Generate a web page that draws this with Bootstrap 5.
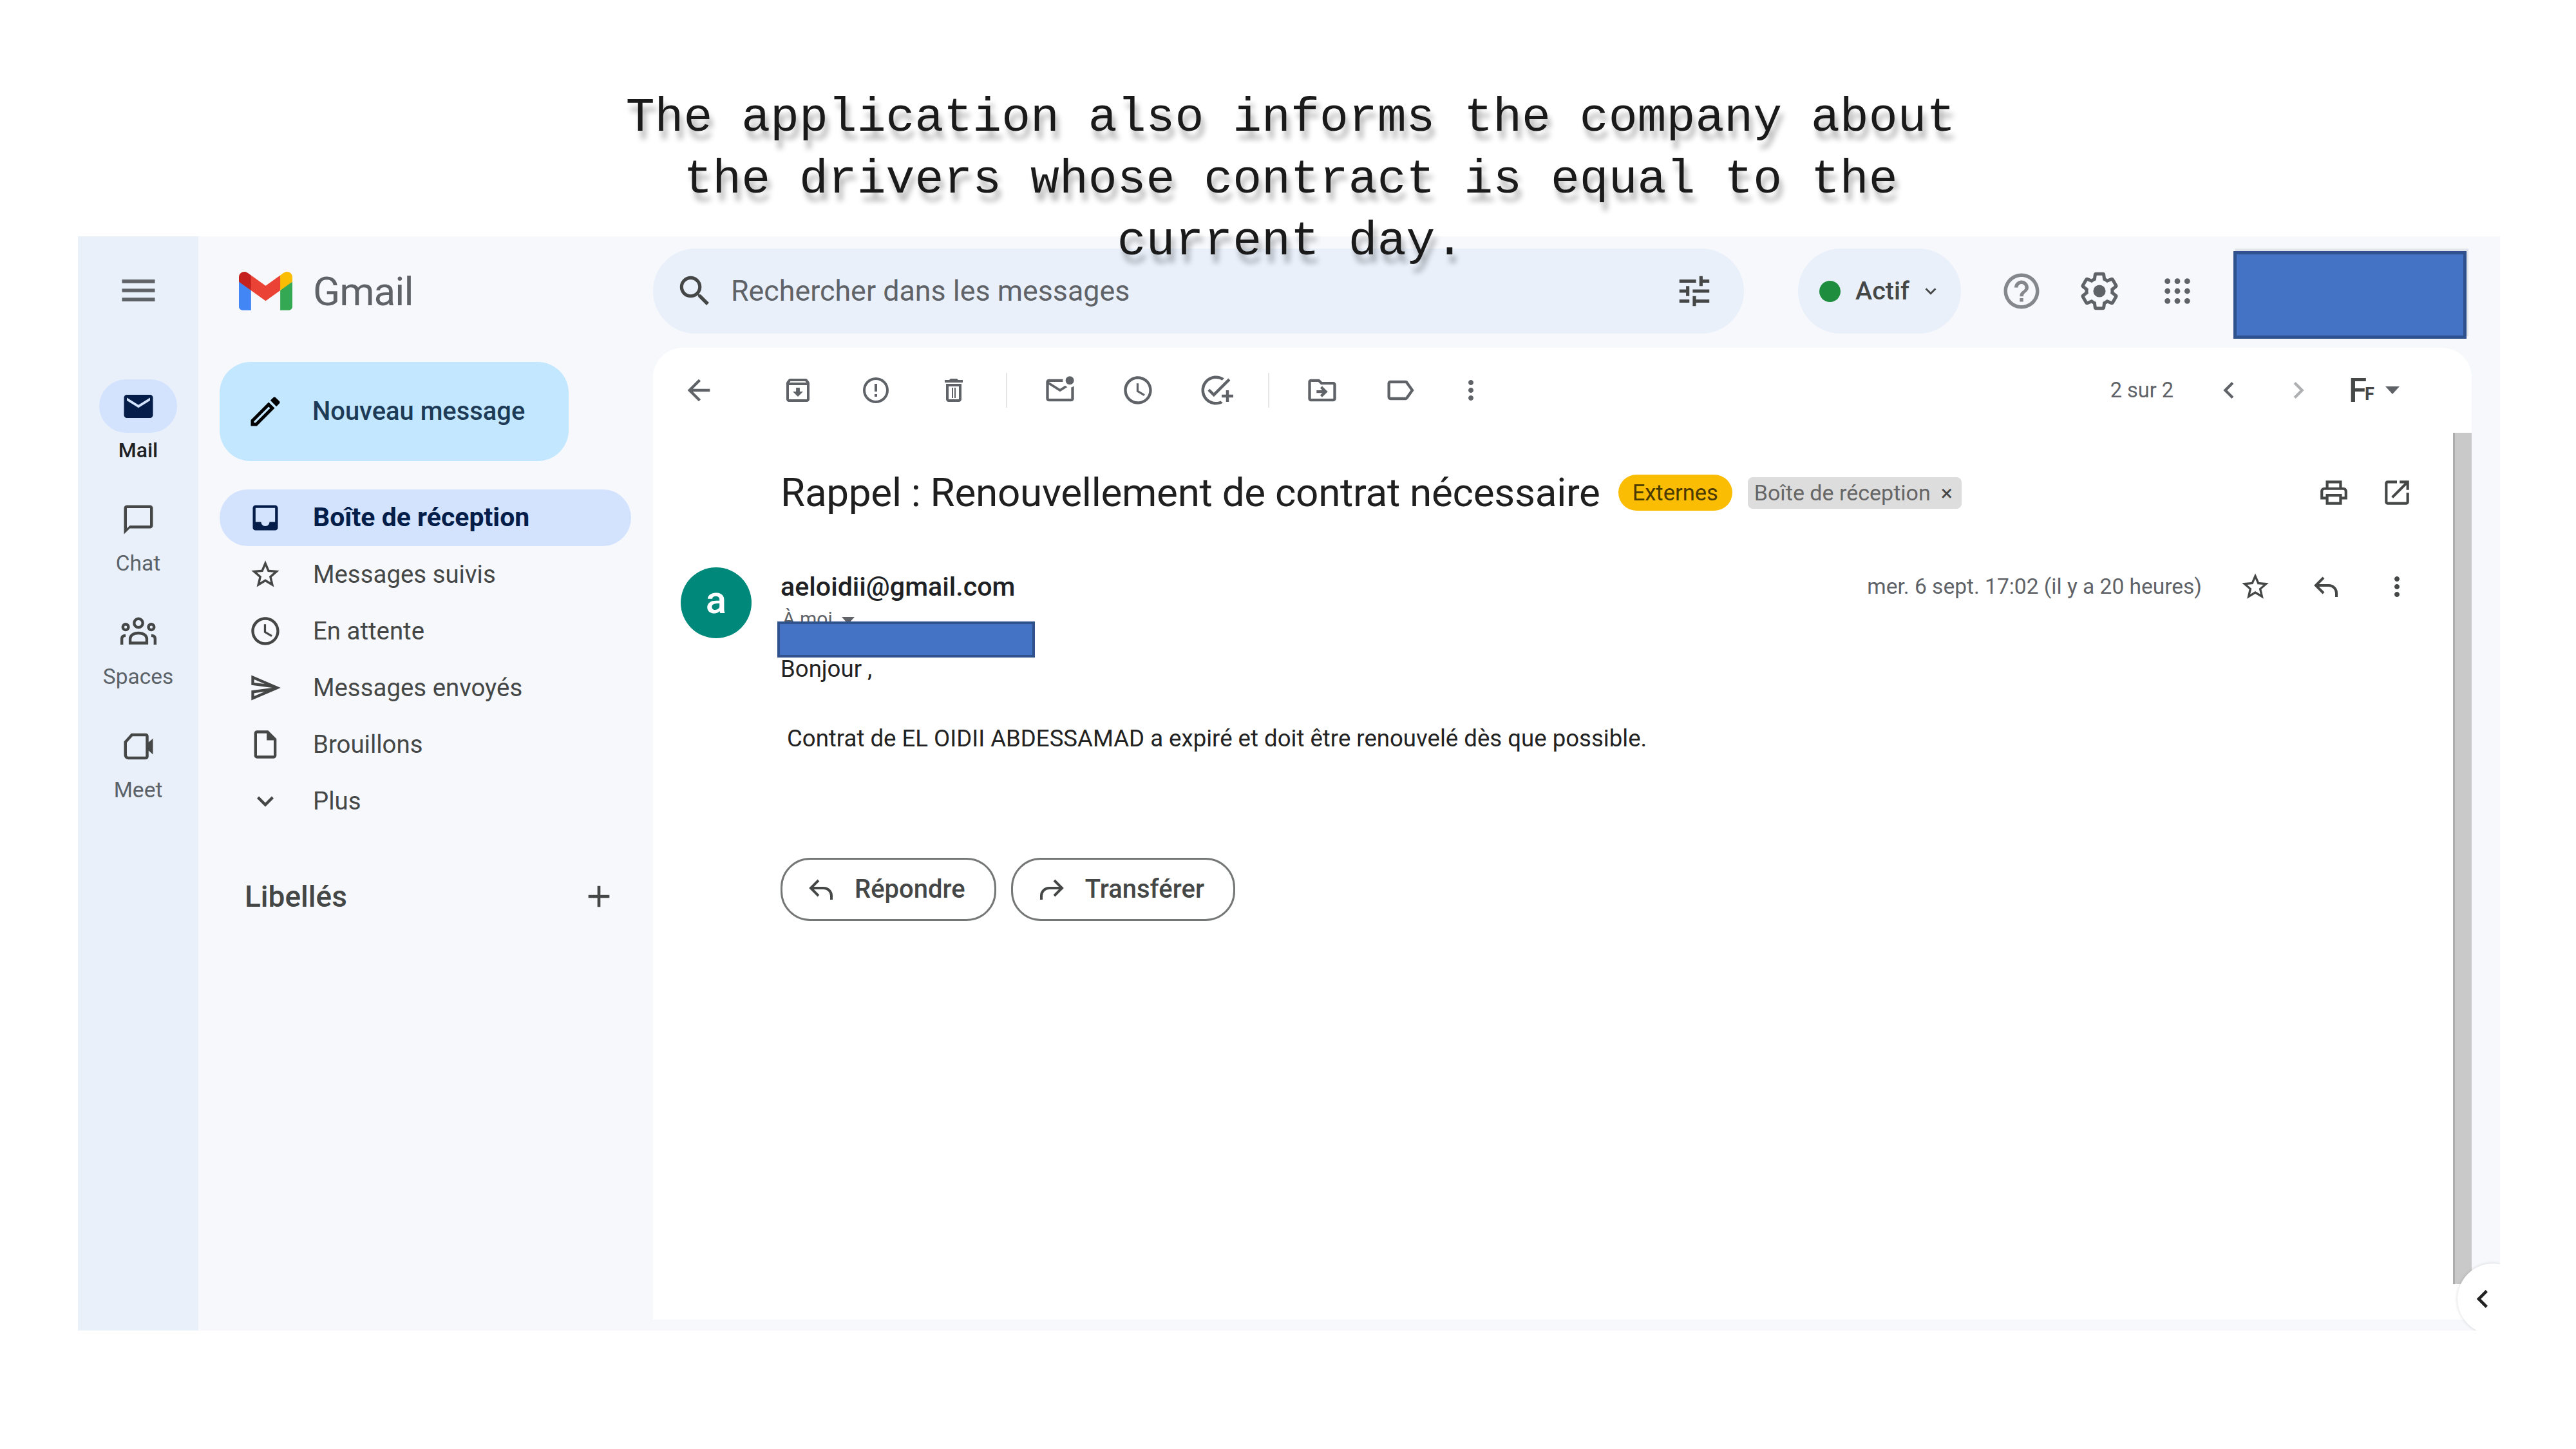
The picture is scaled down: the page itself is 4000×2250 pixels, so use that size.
<!DOCTYPE html>
<html lang="fr">
<head>
<meta charset="UTF-8">
<title>Gmail - Rappel</title>
<link href="https://cdn.jsdelivr.net/npm/bootstrap@5.3.2/dist/css/bootstrap.min.css" rel="stylesheet">
<style>
    html, body { background: #fff; }
    body { width: 4000px; height: 2250px; font-family: Roboto, "Liberation Sans", sans-serif; color: #202124; overflow: hidden; }
    svg { display: block; fill: currentColor; flex: none; }

    /* caption over the screenshot */
    .gm-caption { height: 367px; padding-top: 135px; position: relative; z-index: 5; text-align: center;
        font-family: "Liberation Mono", monospace; font-size: 74.8px; line-height: 96px; color: #1a1a1a;
        text-shadow: 5px 13px 8px rgba(0,0,0,.3); width: 4008px; }

    .gm-frame { margin-left: 121px; width: 3761px; height: 1699px; background: #f6f8fc; overflow: hidden; position: relative; }

    /* left rail */
    .gm-rail { width: 187px; background: #e9f0fa; padding-top: 28px; color: #444746; }
    .gm-burger { height: 112px; margin-bottom: 82px; color: #5f6368; }
    .gm-rail-item { height: 176px; }
    .gm-rail-pill { width: 121px; height: 83px; border-radius: 42px; }
    .gm-rail-pill.on { background: #d3e3fd; color: #041e49; }
    .gm-rail-label { font-size: 33.5px; line-height: 36px; margin-top: 9px; color: #5b6268; }
    .gm-rail-label.on { color: #202124; font-weight: 500; font-size: 32px; }

    .gm-main { width: 3574px; }
    .gm-top { height: 173px; padding-top: 19px; }
    .gm-brand { width: 706px; height: 132px; padding-left: 63px; gap: 32px; }
    .gm-brand span { font-size: 62px; color: #5f6368; letter-spacing: -1px; }
    .gm-search { width: 1694px; height: 132px; background: #e9f0fa; padding: 0 46px 0 34px; color: #444746; }
    .gm-search span { font-size: 44.8px; color: #5f6368; margin-left: 25px; }
    .gm-status { width: 253px; height: 132px; margin-left: 84px; background: #e9f0fa; padding-left: 33px; color: #444746; }
    .gm-dot { width: 33px; height: 33px; background: #1e8e3e; }
    .gm-status span.gm-label { font-size: 39.5px; font-weight: 500; margin: 0 16px 0 23px; }
    .gm-cell { width: 121px; height: 132px; color: #5f6368; }
    .gm-cell.first { margin-left: 33px; }
    .gm-redact { background: #4472c4; border: 5px solid #2f528f; }
    .gm-redact.big { width: 362px; height: 136px; margin: 4px 0 0 27px; box-shadow: 3px -4px 0 0 #e1e4ea; }
    .gm-redact.tiny { position: absolute; left: -5px; top: 24px; width: 400px; height: 56px; border-width: 4px; }

    /* sidebar */
    .gm-side { width: 706px; padding-top: 22px; }
    .gm-compose { width: 542px; height: 154px; margin-left: 33px; border-radius: 48px; background: #c2e7ff; border: 0; padding-left: 41px; gap: 43px; font-size: 39.9px; font-weight: 500; color: #1d3a56; }
    .gm-compose:hover { background: #c2e7ff; color: #1d3a56; }
    .gm-nav { margin: 44px 0 0 33px; width: 639px; }
    .gm-nav-row { height: 88px; padding-left: 45px; gap: 48px; font-size: 38.4px; color: #444746; text-decoration: none; }
    .gm-nav-row:hover { color: #444746; }
    .gm-nav-row.on { background: #d3e3fd; color: #041e49; font-weight: 700; font-size: 41px; }
    .gm-nav-row.on:hover { color: #041e49; }
    .gm-labels { margin: 64px 0 0 72px; width: 578px; height: 80px; font-size: 46px; font-weight: 500; color: #444746; }

    /* message card */
    .gm-card { width: 2824px; height: 1509px; background: #fff; border-radius: 46px 46px 0 0; position: relative; }
    .gm-toolbar { height: 132px; padding-left: 10px; color: #5f6368; }
    .gm-tool { width: 121px; height: 72px; }
    .gm-tool.narrow { width: 100px; }
    .gm-tool.spaced { margin-left: 33px; }
    .gm-tool.after-count { margin-left: 36px; }
    .gm-tool.after-prev { margin-left: 8px; }
    .gm-sep { width: 2px; height: 54px; background: #e4e6e8; margin: 0 21px; }
    .gm-count { font-size: 32.5px; color: #5f6368; margin-left: auto; }
    .gm-fr { margin: 0 106px 0 28px; width: 85px; color: #444746; }
    .gm-fr b { font-size: 51px; line-height: 1; font-weight: 500; }
    .gm-fr i { font-size: 27px; font-style: normal; font-weight: 700; margin-left: -3px; margin-top: 12px; }
    .gm-caret { width: 0; height: 0; border-left: 11px solid transparent; border-right: 11px solid transparent; border-top: 12px solid #5f6368; margin-left: 17px; }

    .gm-subject { height: 130px; margin-top: 28px; padding: 0 91px 0 198px; }
    .gm-subject h1 { font-size: 62px; font-weight: 400; margin: 0; color: #1f1f1f; letter-spacing: -.3px; white-space: nowrap; }
    .gm-tag-ext { height: 56px; padding: 0 22px; margin-left: 28px; background: #fbbc04; color: #4a3a00; font-size: 34.5px; font-weight: 400; line-height: 56px; }
    .gm-tag-in { height: 49px; padding: 0 14px 0 10px; margin-left: 24px; background: #dddddd; color: #666; font-size: 34px; border-radius: 8px; line-height: 49px; }
    .gm-tag-in em { font-style: normal; margin-left: 16px; color: #444; }
    .gm-subject-icon { color: #444746; }

    .gm-msg { margin-top: 51px; padding: 0 61px 0 43px; gap: 45px; }
    .gm-avatar { width: 110px; height: 110px; background: #00897b; color: #fff; font-size: 60px; font-weight: 500; line-height: 1; padding-bottom: 8px; }
    .gm-from { font-size: 41.2px; font-weight: 500; line-height: 58px; color: #202124; }
    .gm-date { font-size: 33.5px; color: #5f6368; margin-right: 28px; }
    .gm-act { width: 110px; height: 60px; color: #444746; }
    .gm-to { font-size: 30px; line-height: 40px; color: #5f6368; position: relative; padding-left: 3px; }
    .gm-to-caret { display: inline-block; width: 0; height: 0; margin-left: 14px; vertical-align: middle; border-left: 10px solid transparent; border-right: 10px solid transparent; border-top: 11px solid #5f6368; }
    .gm-body { font-size: 36.6px; line-height: 53.2px; color: #222; margin-top: 31px; }
    .gm-body p { margin: 0 0 55px 0; }
    .gm-body p + p { margin-left: 10px; }
    .gm-actions { margin-top: 159px; gap: 23px; }
    .gm-reply { height: 98px; border: 3px solid #747775; border-radius: 46px; background: #fff; color: #444746; font-size: 40px; font-weight: 500; padding: 0 45px 0 36px; gap: 28px; }
    .gm-reply:hover { background: #fff; color: #444746; border-color: #747775; }
    .gm-scroll { position: absolute; right: 0; top: 132px; width: 29px; height: 1322px; background: #c9c9c9; border-left: 3px solid #adadad; }
    .gm-collapse { position: absolute; left: 3695px; top: 1595px; width: 110px; height: 110px; background: #fff; box-shadow: 0 0 5px rgba(0,0,0,.16); color: #222; padding-left: 11px; }
</style>
</head>
<body>

<svg width="0" height="0" class="position-absolute">
    <symbol id="i-menu" viewBox="0 0 24 24"><path d="M3 18h18v-2H3v2zm0-5h18v-2H3v2zm0-7v2h18V6H3z"/></symbol>
    <symbol id="i-search" viewBox="0 0 24 24"><path d="M15.5 14h-.79l-.28-.27A6.471 6.471 0 0 0 16 9.5 6.5 6.5 0 1 0 9.5 16c1.61 0 3.09-.59 4.23-1.57l.27.28v.79l5 4.99L20.49 19l-4.99-5zm-6 0C7.01 14 5 11.99 5 9.5S7.01 5 9.5 5 14 7.01 14 9.5 11.99 14 9.5 14z"/></symbol>
    <symbol id="i-tune" viewBox="0 0 24 24"><path d="M3 17v2h6v-2H3zM3 5v2h10V5H3zm10 16v-2h8v-2h-8v-2h-2v6h2zM7 9v2H3v2h4v2h2V9H7zm14 4v-2H11v2h10zm-6-4h2V7h4V5h-4V3h-2v6z"/></symbol>
    <symbol id="i-help" viewBox="0 0 24 24"><path d="M11 18h2v-2h-2v2zm1-16C6.48 2 2 6.48 2 12s4.48 10 10 10 10-4.48 10-10S17.52 2 12 2zm0 18c-4.41 0-8-3.59-8-8s3.59-8 8-8 8 3.59 8 8-3.59 8-8 8zm0-14c-2.21 0-4 1.79-4 4h2c0-1.1.9-2 2-2s2 .9 2 2c0 2-3 1.75-3 5h2c0-2.25 3-2.5 3-5 0-2.21-1.79-4-4-4z"/></symbol>
    <symbol id="i-gear" viewBox="0 0 24 24"><path fill="none" stroke="currentColor" stroke-width="1.9" d="M19.43 12.98c.04-.32.07-.64.07-.98s-.03-.66-.07-.98l2.11-1.65c.19-.15.24-.42.12-.64l-2-3.46c-.12-.22-.39-.3-.61-.22l-2.49 1c-.52-.4-1.08-.73-1.69-.98l-.38-2.65C14.46 2.18 14.25 2 14 2h-4c-.25 0-.46.18-.49.42l-.38 2.65c-.61.25-1.17.59-1.69.98l-2.49-1c-.23-.09-.49 0-.61.22l-2 3.46c-.13.22-.07.49.12.64l2.11 1.65c-.04.32-.07.65-.07.98s.03.66.07.98l-2.11 1.65c-.19.15-.24.42-.12.64l2 3.46c.12.22.39.3.61.22l2.49-1c.52.4 1.08.73 1.69.98l.38 2.65c.03.24.24.42.49.42h4c.25 0 .46-.18.49-.42l.38-2.65c.61-.25 1.17-.59 1.69-.98l2.49 1c.23.09.49 0 .61-.22l2-3.46c.12-.22.07-.49-.12-.64l-2.11-1.65z"/><circle cx="12" cy="12" r="3.6"/></symbol>
    <symbol id="i-apps" viewBox="0 0 24 24"><circle cx="4" cy="4" r="2.3"/><circle cx="12" cy="4" r="2.3"/><circle cx="20" cy="4" r="2.3"/><circle cx="4" cy="12" r="2.3"/><circle cx="12" cy="12" r="2.3"/><circle cx="20" cy="12" r="2.3"/><circle cx="4" cy="20" r="2.3"/><circle cx="12" cy="20" r="2.3"/><circle cx="20" cy="20" r="2.3"/></symbol>
    <symbol id="i-mail" viewBox="0 0 24 24"><path d="M20 4H4c-1.1 0-1.99.9-1.99 2L2 18c0 1.1.9 2 2 2h16c1.1 0 2-.9 2-2V6c0-1.1-.9-2-2-2zm0 4l-8 5-8-5V6l8 5 8-5v2z"/></symbol>
    <symbol id="i-chat" viewBox="0 0 24 24"><path d="M20 2H4c-1.1 0-2 .9-2 2v18l4-4h14c1.1 0 2-.9 2-2V4c0-1.1-.9-2-2-2zm0 14H6l-2 2V4h16v12z"/></symbol>
    <symbol id="i-spaces" viewBox="0 0 24 24"><g fill="none" stroke="currentColor" stroke-width="1.7"><circle cx="12" cy="6" r="2.6"/><circle cx="4.3" cy="8.4" r="1.7"/><circle cx="19.7" cy="8.4" r="1.7"/><path d="M7 18v-2.5c0-2 2-3.5 5-3.5s5 1.500 5 3.500V18z"/><path d="M2 19v-3.500c0-1.300.8-2 2.300-2M22 19v-3.500c0-1.300-.8-2-2.300-2"/></g></symbol>
    <symbol id="i-meet" viewBox="0 0 24 24"><path fill="none" stroke="currentColor" stroke-width="2" d="M7.500 4H17a1 1 0 0 1 1 1v14a1 1 0 0 1-1 1H5a2 2 0 0 1-2-2V9z"/><path d="M18 10l4-3.500v11L18 14z"/></symbol>
    <symbol id="i-pencil" viewBox="0 0 24 24"><path d="M14.060 9.020l.92.92L5.920 19H5v-.92l9.060-9.060M17.660 3c-.25 0-.51.1-.7.29l-1.830 1.830 3.750 3.750 1.830-1.830c.39-.39.39-1.020 0-1.410l-2.340-2.340c-.2-.2-.45-.29-.71-.29zm-3.600 3.190L3 17.250V21h3.750L17.810 9.940l-3.750-3.750z"/></symbol>
    <symbol id="i-inbox" viewBox="0 0 24 24"><path d="M19 3H5c-1.100 0-2 .9-2 2v14c0 1.100.9 2 2 2h14c1.100 0 2-.9 2-2V5c0-1.100-.9-2-2-2zm0 12h-4c0 1.660-1.340 3-3 3s-3-1.340-3-3H5V5h14v10z"/></symbol>
    <symbol id="i-star" viewBox="0 0 24 24"><path d="M22 9.240l-7.190-.62L12 2 9.190 8.630 2 9.240l5.460 4.730L5.820 21 12 17.270 18.180 21l-1.630-7.030L22 9.240zM12 15.400l-3.760 2.270 1-4.280-3.320-2.880 4.380-.38L12 6.100l1.710 4.040 4.380.38-3.320 2.880 1 4.280L12 15.400z"/></symbol>
    <symbol id="i-clock" viewBox="0 0 24 24"><path d="M11.990 2C6.470 2 2 6.480 2 12s4.470 10 9.990 10C17.520 22 22 17.520 22 12S17.520 2 11.990 2zM12 20c-4.420 0-8-3.580-8-8s3.580-8 8-8 8 3.580 8 8-3.580 8-8 8z"/><path d="M12.500 7H11v6l5.250 3.150.75-1.230-4.500-2.670z"/></symbol>
    <symbol id="i-send" viewBox="0 0 24 24"><path d="M4.010 6.030l7.510 3.220-7.520-1 .01-2.220m7.500 8.720L4 17.970v-2.220l7.510-1M2.010 3L2 10l15 2-15 2 .01 7L23 12 2.010 3z"/></symbol>
    <symbol id="i-draft" viewBox="0 0 24 24"><path d="M14 2H6c-1.100 0-2 .9-2 2v16c0 1.100.9 2 2 2h12c1.100 0 2-.9 2-2V8l-6-6zM6 20V4h7v5h5v11H6z"/></symbol>
    <symbol id="i-down" viewBox="0 0 24 24"><path d="M16.590 8.590L12 13.170 7.410 8.590 6 10l6 6 6-6z"/></symbol>
    <symbol id="i-plus" viewBox="0 0 24 24"><path d="M19 13h-6v6h-2v-6H5v-2h6V5h2v6h6v2z"/></symbol>
    <symbol id="i-back" viewBox="0 0 24 24"><path d="M20 11H7.830l5.590-5.590L12 4l-8 8 8 8 1.410-1.410L7.830 13H20v-2z"/></symbol>
    <symbol id="i-archive" viewBox="0 0 24 24"><path d="M20.540 5.230l-1.390-1.680C18.880 3.210 18.470 3 18 3H6c-.47 0-.88.21-1.160.55L3.460 5.230C3.170 5.570 3 6.020 3 6.500V19c0 1.100.9 2 2 2h14c1.100 0 2-.9 2-2V6.500c0-.48-.17-.93-.46-1.270zM6.240 5h11.520l.83 1H5.420l.82-1zM5 19V8h14v11H5zm8.450-9h-2.900v3H8l4 4 4-4h-2.550z"/></symbol>
    <symbol id="i-spam" viewBox="0 0 24 24"><path d="M12 2a10 10 0 1 0 0 20 10 10 0 0 0 0-20zm0 18a8 8 0 1 1 0-16 8 8 0 0 1 0 16z"/><path d="M11 7h2v6h-2zM11 15h2v2h-2z"/></symbol>
    <symbol id="i-trash" viewBox="0 0 24 24"><path d="M16 9v10H8V9h8m-1.500-6h-5l-1 1H5v2h14V4h-3.500l-1-1zM18 7H6v12c0 1.100.9 2 2 2h8c1.100 0 2-.9 2-2V7z"/><path d="M10.500 10h1v8h-1zM12.500 10h1v8h-1z"/></symbol>
    <symbol id="i-unread" viewBox="0 0 24 24"><path d="M22 8.980V18c0 1.100-.9 2-2 2H4c-1.100 0-2-.9-2-2V6c0-1.100.9-2 2-2h10.100c-.06.32-.1.66-.1 1s.04.68.1 1H4l8 5 3.670-2.290c.47.43 1.020.76 1.630.98L12 13 4 8v10h16V9.900c.74-.15 1.420-.48 2-.92zM16 5c0 1.660 1.340 3 3 3s3-1.340 3-3-1.340-3-3-3-3 1.340-3 3z"/></symbol>
    <symbol id="i-task" viewBox="0 0 24 24"><path d="M22 5.180L10.590 16.600l-4.240-4.240 1.410-1.410 2.830 2.830 10-10L22 5.180zM12 20c-4.410 0-8-3.590-8-8s3.590-8 8-8c1.570 0 3.040.46 4.280 1.250l1.450-1.450A9.900 9.900 0 0 0 12 2C6.480 2 2 6.480 2 12s4.480 10 10 10c1.730 0 3.360-.44 4.780-1.220l-1.500-1.500c-1 .46-2.110.72-3.280.72zm7-5h-3v2h3v3h2v-3h3v-2h-3v-3h-2v3z"/></symbol>
    <symbol id="i-move" viewBox="0 0 24 24"><path d="M20 6h-8l-2-2H4c-1.100 0-1.990.9-1.990 2L2 18c0 1.100.9 2 2 2h16c1.100 0 2-.9 2-2V8c0-1.100-.9-2-2-2zm0 12H4V6h5.170l2 2H20v10zm-8.010-9l-1.410 1.410L12.160 12H8v2h4.160l-1.590 1.590L11.990 17 16 13.010 11.990 9z"/></symbol>
    <symbol id="i-label" viewBox="0 0 24 24"><path d="M17.630 5.840C17.270 5.330 16.670 5 16 5L5 5.010C3.900 5.010 3 5.900 3 7v10c0 1.100.9 1.990 2 1.990L16 19c.67 0 1.270-.33 1.630-.84L22 12l-4.370-6.160zM16 17H5V7h11l3.550 5L16 17z"/></symbol>
    <symbol id="i-more" viewBox="0 0 24 24"><path d="M12 8c1.100 0 2-.9 2-2s-.9-2-2-2-2 .9-2 2 .9 2 2 2zm0 2c-1.100 0-2 .9-2 2s.9 2 2 2 2-.9 2-2-.9-2-2-2zm0 6c-1.100 0-2 .9-2 2s.9 2 2 2 2-.9 2-2-.9-2-2-2z"/></symbol>
    <symbol id="i-left" viewBox="0 0 24 24"><path d="M15.410 7.410L14 6l-6 6 6 6 1.410-1.410L10.830 12z"/></symbol>
    <symbol id="i-right" viewBox="0 0 24 24"><path d="M10 6L8.590 7.410 13.170 12l-4.580 4.590L10 18l6-6z"/></symbol>
    <symbol id="i-print" viewBox="0 0 24 24"><path d="M19 8h-1V3H6v5H5c-1.660 0-3 1.340-3 3v6h4v4h12v-4h4v-6c0-1.660-1.340-3-3-3zM8 5h8v3H8V5zm8 12v2H8v-4h8v2zm2-2v-2H6v2H4v-4c0-.55.45-1 1-1h14c.55 0 1 .45 1 1v4h-2z"/></symbol>
    <symbol id="i-open" viewBox="0 0 24 24"><path d="M19 19H5V5h7V3H5c-1.110 0-2 .9-2 2v14c0 1.100.89 2 2 2h14c1.100 0 2-.9 2-2v-7h-2v7zM14 3v2h3.590l-9.830 9.830 1.410 1.410L19 6.410V10h2V3h-7z"/></symbol>
    <symbol id="i-reply" viewBox="0 0 24 24"><path fill="none" stroke="currentColor" stroke-width="2" d="M10 5l-6 6 6 6M4 11h10a6 6 0 0 1 6 6v3"/></symbol>
    <symbol id="i-forward" viewBox="0 0 24 24"><path fill="none" stroke="currentColor" stroke-width="2" d="M14 5l6 6-6 6M20 11H10a6 6 0 0 0-6 6v3"/></symbol>
</svg>

<div class="gm-caption">The application also informs the company about<br>the drivers whose contract is equal to the<br>current day.</div>

<div class="gm-frame d-flex">
    <!-- rail -->
    <div class="gm-rail d-flex flex-column align-items-center">
        <div class="gm-burger d-flex align-items-center"><svg width="68" height="68"><use href="#i-menu"/></svg></div>
        <div class="gm-rail-item d-flex flex-column align-items-center">
            <div class="gm-rail-pill on d-flex align-items-center justify-content-center"><svg width="54" height="54"><use href="#i-mail"/></svg></div>
            <div class="gm-rail-label on">Mail</div>
        </div>
        <div class="gm-rail-item d-flex flex-column align-items-center">
            <div class="gm-rail-pill d-flex align-items-center justify-content-center"><svg width="54" height="54"><use href="#i-chat"/></svg></div>
            <div class="gm-rail-label">Chat</div>
        </div>
        <div class="gm-rail-item d-flex flex-column align-items-center">
            <div class="gm-rail-pill d-flex align-items-center justify-content-center"><svg width="62" height="62"><use href="#i-spaces"/></svg></div>
            <div class="gm-rail-label">Spaces</div>
        </div>
        <div class="gm-rail-item d-flex flex-column align-items-center">
            <div class="gm-rail-pill d-flex align-items-center justify-content-center"><svg width="54" height="54"><use href="#i-meet"/></svg></div>
            <div class="gm-rail-label">Meet</div>
        </div>
    </div>

    <div class="gm-main">
        <!-- top bar -->
        <div class="gm-top d-flex align-items-start">
            <div class="gm-brand d-flex align-items-center">
                <svg width="83" height="60" viewBox="0 0 256 193" preserveAspectRatio="none">
                    <path fill="#4285F4" d="M58.182 192.050V93.140L27.507 65.077 0 49.504v125.091c0 9.658 7.825 17.455 17.455 17.455h40.727Z"/>
                    <path fill="#34A853" d="M197.818 192.050h40.727c9.659 0 17.455-7.826 17.455-17.455V49.505l-31.156 17.837-27.026 25.798v98.910Z"/>
                    <path fill="#EA4335" d="m58.182 93.140-4.174-38.647 4.174-36.989L128 69.868l69.818-52.364 4.669 34.992-4.669 40.644L128 145.504z"/>
                    <path fill="#FBBC04" d="M197.818 17.504V93.140L256 49.504V26.231c0-21.585-24.640-33.890-41.890-20.945l-16.292 12.218Z"/>
                    <path fill="#C5221F" d="M0 49.504l26.759 20.070L58.182 93.140V17.504L41.890 5.286C24.610-7.660 0 4.646 0 26.230v23.273Z"/>
                </svg>
                <span>Gmail</span>
            </div>
            <div class="gm-search rounded-pill d-flex align-items-center">
                <svg width="62" height="62"><use href="#i-search"/></svg>
                <span>Rechercher dans les messages</span>
                <svg class="ms-auto" width="62" height="62"><use href="#i-tune"/></svg>
            </div>
            <div class="gm-status rounded-pill d-flex align-items-center">
                <div class="gm-dot rounded-circle"></div>
                <span class="gm-label">Actif</span>
                <svg width="34" height="34"><use href="#i-down"/></svg>
            </div>
            <div class="gm-cell first d-flex align-items-center justify-content-center"><svg width="66" height="66" class="opacity-75"><use href="#i-help"/></svg></div>
            <div class="gm-cell d-flex align-items-center justify-content-center"><svg width="64" height="64"><use href="#i-gear"/></svg></div>
            <div class="gm-cell d-flex align-items-center justify-content-center"><svg width="46" height="46"><use href="#i-apps"/></svg></div>
            <div class="gm-redact big"></div>
        </div>

        <div class="d-flex">
            <!-- sidebar -->
            <div class="gm-side">
                <button class="btn gm-compose d-flex align-items-center">
                    <svg width="60" height="60" class="text-black"><use href="#i-pencil"/></svg>Nouveau message
                </button>
                <div class="gm-nav d-flex flex-column">
                    <a href="#" class="gm-nav-row on rounded-pill d-flex align-items-center"><svg width="52" height="52"><use href="#i-inbox"/></svg>Boîte de réception</a>
                    <a href="#" class="gm-nav-row rounded-pill d-flex align-items-center"><svg width="52" height="52"><use href="#i-star"/></svg>Messages suivis</a>
                    <a href="#" class="gm-nav-row rounded-pill d-flex align-items-center"><svg width="52" height="52"><use href="#i-clock"/></svg>En attente</a>
                    <a href="#" class="gm-nav-row rounded-pill d-flex align-items-center"><svg width="52" height="52"><use href="#i-send"/></svg>Messages envoyés</a>
                    <a href="#" class="gm-nav-row rounded-pill d-flex align-items-center"><svg width="52" height="52"><use href="#i-draft"/></svg>Brouillons</a>
                    <a href="#" class="gm-nav-row rounded-pill d-flex align-items-center"><svg width="52" height="52"><use href="#i-down"/></svg>Plus</a>
                </div>
                <div class="gm-labels d-flex align-items-center justify-content-between">
                    <span>Libellés</span>
                    <svg width="56" height="56"><use href="#i-plus"/></svg>
                </div>
            </div>

            <!-- message -->
            <div class="gm-card">
                <div class="gm-toolbar d-flex align-items-center">
                    <div class="gm-tool d-flex align-items-center justify-content-center"><svg width="52" height="52"><use href="#i-back"/></svg></div>
                    <div class="gm-tool spaced d-flex align-items-center justify-content-center"><svg width="48" height="48"><use href="#i-archive"/></svg></div>
                    <div class="gm-tool d-flex align-items-center justify-content-center"><svg width="48" height="48"><use href="#i-spam"/></svg></div>
                    <div class="gm-tool d-flex align-items-center justify-content-center"><svg width="48" height="48"><use href="#i-trash"/></svg></div>
                    <div class="gm-sep"></div>
                    <div class="gm-tool d-flex align-items-center justify-content-center"><svg width="52" height="52"><use href="#i-unread"/></svg></div>
                    <div class="gm-tool d-flex align-items-center justify-content-center"><svg width="52" height="52"><use href="#i-clock"/></svg></div>
                    <div class="gm-tool d-flex align-items-center justify-content-center"><svg width="54" height="54"><use href="#i-task"/></svg></div>
                    <div class="gm-sep"></div>
                    <div class="gm-tool d-flex align-items-center justify-content-center"><svg width="52" height="52"><use href="#i-move"/></svg></div>
                    <div class="gm-tool d-flex align-items-center justify-content-center"><svg width="52" height="52"><use href="#i-label"/></svg></div>
                    <div class="gm-tool narrow d-flex align-items-center justify-content-center"><svg width="48" height="48"><use href="#i-more"/></svg></div>
                    <span class="gm-count">2 sur 2</span>
                    <div class="gm-tool narrow after-count d-flex align-items-center justify-content-center"><svg width="52" height="52"><use href="#i-left"/></svg></div>
                    <div class="gm-tool narrow after-prev d-flex align-items-center justify-content-center opacity-50"><svg width="52" height="52"><use href="#i-right"/></svg></div>
                    <div class="gm-fr d-flex align-items-center"><b>F</b><i>F</i><div class="gm-caret"></div></div>
                </div>

                <div class="gm-subject d-flex align-items-center">
                    <h1>Rappel : Renouvellement de contrat nécessaire</h1>
                    <span class="gm-tag-ext rounded-pill">Externes</span>
                    <span class="gm-tag-in">Boîte de réception<em>×</em></span>
                    <div class="ms-auto d-flex align-items-center gap-5 gm-subject-icon">
                        <svg width="50" height="50"><use href="#i-print"/></svg>
                        <svg width="50" height="50"><use href="#i-open"/></svg>
                    </div>
                </div>

                <div class="gm-msg d-flex align-items-start">
                    <div class="gm-avatar rounded-circle d-flex align-items-center justify-content-center flex-shrink-0">a</div>
                    <div class="flex-grow-1">
                        <div class="d-flex align-items-center">
                            <div class="gm-from">aeloidii@gmail.com</div>
                            <div class="gm-date ms-auto">mer. 6 sept. 17:02 (il y a 20 heures)</div>
                            <div class="gm-act d-flex align-items-center justify-content-center"><svg width="50" height="50"><use href="#i-star"/></svg></div>
                            <div class="gm-act d-flex align-items-center justify-content-center"><svg width="48" height="48"><use href="#i-reply"/></svg></div>
                            <div class="gm-act d-flex align-items-center justify-content-center"><svg width="48" height="48"><use href="#i-more"/></svg></div>
                        </div>
                        <div class="gm-to">À moi<span class="gm-to-caret"></span>
                            <div class="gm-redact tiny"></div>
                        </div>
                        <div class="gm-body">
                            <p>Bonjour ,</p>
                            <p>Contrat de EL OIDII ABDESSAMAD a expiré et doit être renouvelé dès que possible.</p>
                        </div>
                        <div class="gm-actions d-flex">
                            <button class="btn gm-reply d-flex align-items-center"><svg width="48" height="48"><use href="#i-reply"/></svg>Répondre</button>
                            <button class="btn gm-reply d-flex align-items-center"><svg width="48" height="48"><use href="#i-forward"/></svg>Transférer</button>
                        </div>
                    </div>
                </div>
                <div class="gm-scroll"></div>
            </div>
        </div>
    </div>
    <div class="gm-collapse rounded-circle d-flex align-items-center"><svg width="56" height="56"><use href="#i-left"/></svg></div>
</div>

</body>
</html>
